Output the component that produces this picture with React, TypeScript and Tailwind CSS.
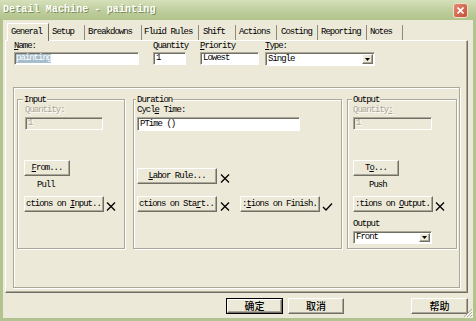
import type { ReactNode } from 'react';

const txt = "font-['Liberation_Mono','DejaVu_Sans_Mono',monospace] text-[9px] leading-[9px] tracking-[-1px]";
const cjk = "font-['Noto_Sans_CJK_SC',sans-serif] text-[10px] leading-none tracking-normal font-medium";

const raised =
  'border border-t-white border-l-white border-r-[#716f64] border-b-[#716f64] shadow-[inset_-1px_-1px_0_#aca899] bg-[#ece9d8]';
const sunken =
  'border border-t-[#aca899] border-l-[#aca899] border-r-white border-b-white shadow-[inset_1px_1px_0_#716f64]';
const etched = 'border border-[#aca899] shadow-[inset_1px_1px_0_#fff,1px_1px_0_#fff]';
const grey = 'text-[#aca899] [text-shadow:1px_1px_0_#fff]';

function U({ children }: { children: ReactNode }) {
  return <span className="underline decoration-1 underline-offset-[1px]">{children}</span>;
}

function Btn({ className, children }: { className: string; children: ReactNode }) {
  return (
    <div className={`flex shrink-0 items-center overflow-hidden whitespace-nowrap ${raised} ${className}`}>
      {children}
    </div>
  );
}

function Cross({ className = '' }: { className?: string }) {
  return (
    <svg width="10" height="9" viewBox="0 0 10 9" className={`mb-[1px] shrink-0 ${className}`}>
      <path d="M1 0.5 L9 8.5 M9 0.5 L1 8.5" stroke="#000" strokeWidth="1.3" fill="none" />
    </svg>
  );
}

function Check({ className = '' }: { className?: string }) {
  return (
    <svg width="11" height="8" viewBox="0 0 11 8" className={`mb-[1px] shrink-0 ${className}`}>
      <path d="M1 4 L4 7 L10 0.5" fill="none" stroke="#000" strokeWidth="1.3" />
    </svg>
  );
}

function Select({ className, value }: { className: string; value: string }) {
  return (
    <div className={`flex bg-white ${sunken} ${className}`}>
      <div className="flex flex-1 items-center pl-[2px]">{value}</div>
      <div className={`m-[1px] flex w-[11px] items-center justify-center ${raised}`}>
        <svg width="5" height="3" viewBox="0 0 5 3">
          <path d="M0 0 H5 L2.5 3 Z" fill="#000" />
        </svg>
      </div>
    </div>
  );
}

function Group({
  title,
  labelLeft,
  className,
  children,
}: {
  title: string;
  labelLeft: string;
  className: string;
  children: ReactNode;
}) {
  return (
    <div className={`relative h-[150px] shrink-0 ${etched} ${className}`}>
      <span className={`absolute -top-[4px] bg-[#ece9d8] px-[1px] ${labelLeft}`}>{title}</span>
      {children}
    </div>
  );
}

export default function App() {
  return (
    <div className={`relative flex h-[321px] w-[476px] flex-col bg-[#b3c38f] text-black ${txt}`}>
      {/* title bar */}
      <div className="flex h-[20px] items-center justify-between bg-linear-to-b from-[#d6e0bb] via-[#c0cf9e] to-[#b1c38c] pl-[3px] pr-[8px]">
        <span className="text-[10px] font-bold leading-[10px] tracking-[0.1px] text-white [text-shadow:1px_1px_0_#7f8f5c]">
          Detail Machine - painting
        </span>
        <div className="flex h-[15px] w-[15px] items-center justify-center rounded-[3px] border border-[#f3ddd2] bg-linear-to-br from-[#e58a70] to-[#c04e36]">
          <svg width="7" height="7" viewBox="0 0 7 7">
            <path d="M0.5 0.5 L6.5 6.5 M6.5 0.5 L0.5 6.5" stroke="#fff" strokeWidth="1.6" />
          </svg>
        </div>
      </div>

      <div className="mx-[3px] mb-[3px] flex flex-1 flex-col bg-[#ece9d8] px-[2px] pt-[3px]">
        {/* tabs */}
        <div className="flex h-[17px] items-end pl-[2px]">
          <div className="relative z-10 -mb-[1px] h-[18px] w-[42px] border border-b-0 border-t-white border-l-white border-r-[#716f64] bg-[#ece9d8] pl-[3px] pt-[4px]">
            General
          </div>
          <div className="h-[15px] w-[36px] border-r border-[#8d8b7d] pl-[3px] pt-[3px]">Setup</div>
          <div className="h-[15px] w-[57px] border-r border-[#8d8b7d] pl-[3px] pt-[3px]">Breakdowns</div>
          <div className="h-[15px] w-[57px] border-r border-[#8d8b7d] pl-[2px] pt-[3px]">Fluid Rules</div>
          <div className="h-[15px] w-[37px] border-r border-[#8d8b7d] pl-[4px] pt-[3px]">Shift</div>
          <div className="h-[15px] w-[41px] border-r border-[#8d8b7d] pl-[3px] pt-[3px]">Actions</div>
          <div className="h-[15px] w-[41px] border-r border-[#8d8b7d] pl-[4px] pt-[3px]">Costing</div>
          <div className="h-[15px] w-[49px] border-r border-[#8d8b7d] pl-[3px] pt-[3px]">Reporting</div>
          <div className="h-[15px] w-[36px] border-r border-[#8d8b7d] pl-[3px] pt-[3px]">Notes</div>
        </div>

        {/* tab page */}
        <div className="flex h-[253px] w-[463px] flex-col border border-t-white border-l-white border-r-[#716f64] border-b-[#716f64] pl-[7px] pt-[1px] shadow-[inset_-1px_-1px_0_#aca899]">
          <div className="ml-[1px] flex">
            <div className="mr-[14px] flex w-[125px] flex-col">
              <div className="h-[10px]">
                <U>N</U>ame:
              </div>
              <div className={`flex h-[13px] items-center bg-white pl-[1px] ${sunken}`}>
                <span className="bg-[#a6bdcc] text-white">painting</span>
              </div>
            </div>
            <div className="mr-[14px] flex w-[33px] flex-col">
              <div className="h-[10px] whitespace-nowrap">Quantity</div>
              <div className={`flex h-[13px] items-center bg-white pl-[2px] ${sunken}`}>1</div>
            </div>
            <div className="mr-[6px] flex w-[59px] flex-col">
              <div className="h-[10px]">
                <U>P</U>riority
              </div>
              <div className={`flex h-[13px] items-center bg-white pl-[2px] ${sunken}`}>Lowest</div>
            </div>
            <div className="flex w-[110px] flex-col">
              <div className="h-[10px]">
                <U>T</U>ype:
              </div>
              <Select className="h-[14px] w-[110px]" value="Single" />
            </div>
          </div>

          <div className={`mt-[21px] flex h-[201px] w-[447px] items-start pl-[3px] pt-[11px] ${etched}`}>
            <Group title="Input" labelLeft="left-[5px]" className="mr-[8px] w-[108px]">
              <div className="flex flex-col pl-[7px] pt-[6px]">
                <div className={`h-[9px] ${grey}`}>Quantity:</div>
                <div className={`mt-[2px] flex h-[13px] w-[78px] items-center pl-[2px] ${sunken} ${grey}`}>1</div>
                <Btn className="ml-[-1px] mt-[30px] h-[16px] w-[46px] justify-center">
                  <span>
                    <U>F</U>rom...
                  </span>
                </Btn>
                <div className="ml-[12px] mt-[5px] h-[9px]">Pull</div>
                <div className="ml-[-1px] mt-[6px] flex items-end gap-[2px]">
                  <Btn className="h-[16px] w-[80px] pl-[1px]">
                    <span>
                      ctions on <U>I</U>nput..
                    </span>
                  </Btn>
                  <Cross />
                </div>
              </div>
            </Group>

            <Group title="Duration" labelLeft="left-[2px]" className="mr-[5px] w-[209px]">
              <div className="flex flex-col pl-[3px] pt-[6px]">
                <div className="h-[9px]">
                  Cycl<U>e</U> Time:
                </div>
                <div className={`mt-[2px] flex h-[14px] w-[163px] items-center bg-white pl-[2px] ${sunken}`}>
                  PTime ()
                </div>
                <div className="mt-[37px] flex items-end gap-[3px]">
                  <Btn className="h-[16px] w-[80px] justify-center">
                    <span>
                      <U>L</U>abor Rule...
                    </span>
                  </Btn>
                  <Cross />
                </div>
                <div className="mt-[12px] flex items-end">
                  <Btn className="h-[16px] w-[80px] pl-[1px]">
                    <span>
                      ctions on Sta<U>r</U>t..
                    </span>
                  </Btn>
                  <Cross className="ml-[3px]" />
                  <Btn className="ml-[10px] h-[16px] w-[80px] pl-[1px]">
                    <span>
                      :<U>t</U>ions on Finish.
                    </span>
                  </Btn>
                  <Check className="ml-[2px]" />
                </div>
              </div>
            </Group>

            <Group title="Output" labelLeft="left-[4px]" className="w-[110px]">
              <div className="flex flex-col pl-[5px] pt-[6px]">
                <div className={`h-[9px] ${grey}`}>
                  Quantity<U>:</U>
                </div>
                <div className={`mt-[2px] flex h-[13px] w-[79px] items-center pl-[2px] ${sunken} ${grey}`}>1</div>
                <Btn className="mt-[30px] h-[16px] w-[46px] justify-center">
                  <span>
                    T<U>o</U>...
                  </span>
                </Btn>
                <div className="ml-[16px] mt-[5px] h-[9px]">Push</div>
                <div className="mt-[6px] flex items-end gap-[2px]">
                  <Btn className="h-[16px] w-[80px] pl-[1px]">
                    <span>
                      :tions on <U>O</U>utput.
                    </span>
                  </Btn>
                  <Cross />
                </div>
                <div className="mt-[8px] h-[9px]">Output</div>
                <Select className="mt-[2px] h-[13px] w-[79px]" value="Front" />
              </div>
            </Group>
          </div>
        </div>

        {/* dialog buttons */}
        <div className="mt-[5px] flex w-[463px] justify-end">
          <div className="h-[16px] w-[57px] border border-black">
            <div className={`flex h-full w-full items-center justify-center ${raised} ${cjk}`}>确定</div>
          </div>
          <Btn className={`ml-[5px] h-[16px] w-[56px] justify-center ${cjk}`}>取消</Btn>
          <Btn className={`ml-[67px] h-[16px] w-[57px] justify-center ${cjk}`}>帮助</Btn>
        </div>
      </div>

      {/* size grip */}
      <svg width="10" height="10" viewBox="0 0 10 10" className="absolute bottom-[3px] right-[3px]">
        <path d="M9 1 L1 9 M9 4 L4 9 M9 7 L7 9" stroke="#aca899" strokeWidth="1" />
        <path d="M10 2 L2 10 M10 5 L5 10 M10 8 L8 10" stroke="#fff" strokeWidth="1" />
      </svg>
    </div>
  );
}
